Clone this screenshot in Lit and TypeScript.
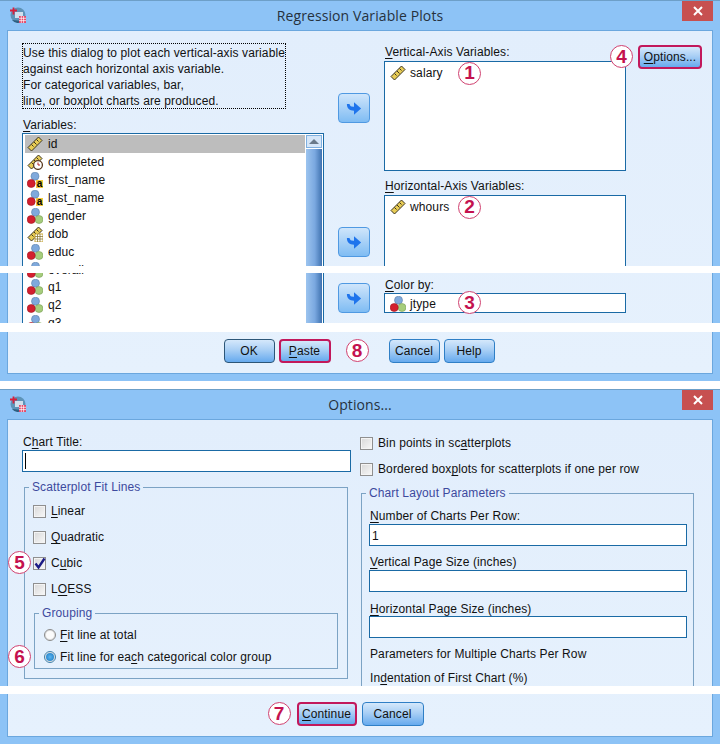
import { LitElement, html, css, svg } from "lit";
import { customElement } from "lit/decorators.js";

const ruler = svg`<g stroke="#3a3320" stroke-width="1"><polygon points="1,11.5 11.5,1 15,4.5 4.5,15" fill="#e8cc55"/><path d="M4.5,8.5l2,2M7,6l2.5,2.5M9.5,3.5l2,2" fill="none"/></g>`;
const scale = (v: unknown) => svg`<svg class="ic" viewBox="0 0 16 16">${ruler}${v}</svg>`;
const icons: Record<string, unknown> = {
  scale: scale(""),
  time: svg`<svg class="ic" viewBox="0 0 16 16">${ruler}<circle cx="11" cy="11" r="4.4" fill="#fff" stroke="#5a3a20" stroke-width="1.3"/><path d="M11,8.5V11H13" stroke="#b02020" fill="none"/></svg>`,
  date: svg`<svg class="ic" viewBox="0 0 16 16">${ruler}<rect x="8" y="8" width="8" height="8" fill="#fff" stroke="#c9a83a"/><path d="M8,10.5h8M8,13h8M10.5,8v8M13,8v8" stroke="#8a7a3a" stroke-width=".8"/></svg>`,
  nominal: svg`<svg class="ic" viewBox="0 0 16 16"><circle cx="8.5" cy="4.2" r="4" fill="#7fa9dc" stroke="#5a7fa8" stroke-width=".6"/><circle cx="12" cy="11.5" r="4" fill="#a6cd7c" stroke="#7a9f58" stroke-width=".6"/><circle cx="4.2" cy="11.5" r="4" fill="#d31f2e" stroke="#a01822" stroke-width=".6"/></svg>`,
  string: svg`<svg class="ic" viewBox="0 0 16 16"><circle cx="8" cy="4.2" r="4" fill="#7fa9dc" stroke="#5a7fa8" stroke-width=".6"/><circle cx="4.2" cy="11.5" r="4" fill="#d31f2e" stroke="#a01822" stroke-width=".6"/><rect x="9" y="8" width="7" height="8" fill="#f3c93c"/><text x="12.5" y="15" font-family="Liberation Sans" font-size="10" font-weight="700" text-anchor="middle" fill="#000">a</text></svg>`,
};

const appIcon = svg`<svg class="app" viewBox="0 0 16 16"><circle cx="8" cy="8" r="7.5" fill="#5d93b8"/><path d="M2,13a7.5,7.5 0 0 0 11,1z" fill="#2f5f80"/><rect x="5" y="5" width="8" height="6" fill="#cfe0ee"/><path d="M3.5,.5V7.5M0,3.5H7" stroke="#d8203c" stroke-width="1.8"/><rect x="9" y="9" width="7" height="7" fill="#e2486a"/><path d="M9,11.3h7M9,13.6h7M11.3,9v7M13.6,9v7" stroke="#fff" stroke-width=".7"/></svg>`;
const arrow = svg`<svg class="arr" viewBox="0 0 18 16"><path d="M1,3 L4,3 C4.5,5.5 5.5,6 9,6 V1 L17,8 L9,15 V10.5 C4,10.5 1,8 1,3z" fill="#1f74ec"/></svg>`;
const checkMark = svg`<svg class="mark" viewBox="0 0 13 13"><path d="M2.5,6.5 L5.5,10.5 L11.5,1.5" stroke="#1c1c86" stroke-width="2.4" fill="none"/></svg>`;

const varRows: [string, string, boolean?][] = [
  ["scale", "id", true], ["time", "completed"], ["string", "first_name"], ["string", "last_name"],
  ["nominal", "gender"], ["date", "dob"], ["nominal", "educ"], ["nominal", "overall"],
];
const laterRows = ["q1", "q2", "q3"];

@customElement("app-root")
export class AppRoot extends LitElement {
  static styles = css`
    :host { display: block; width: 720px; height: 744px; background: #fff; overflow: hidden;
      font: 12px/16px "Liberation Sans", Arial, sans-serif; letter-spacing: .115px; color: #111; }
    * { box-sizing: border-box; }
    u { text-decoration-thickness: 1px; text-underline-offset: 2px; }
    .root { display: flex; flex-direction: column; gap: 8px; }
    .win { position: relative; background: #8dc3f6; border-top: 1px solid #6d9fc8; padding: 0 7px 7px; }
    .bar { height: 29px; display: grid; grid-template-columns: 1fr auto 1fr; }
    .app { width: 16px; height: 16px; margin: 6px 0 0 3px; display: block; }
    .title { font: 14px/30px "Open Sans", sans-serif; letter-spacing: .1px; color: #26323e; }
    .close { justify-self: end; width: 31px; height: 20px; background: #c75050; color: #fff;
      display: flex; align-items: center; justify-content: center; }
    .close svg { width: 10px; height: 10px; }
    .body { border: 1px solid #6ba7de; background: linear-gradient(#e2eefc, #e6f1fd); padding: 0 0 10px 14px; }
    .main1 { height: 300px; padding-top: 12px; display: grid; grid-template-columns: 302px 32px 242px 64px; column-gap: 14px; }
    .arrows { padding-top: 50px; display: flex; flex-direction: column; }
    .col3 { padding-top: 1px; }
    .col4 { margin-left: -2px; padding-top: 2px; }
    .note { width: 264px; height: 66px; border: 1px dotted #000; padding-top: 1px; white-space: nowrap; }
    .lbl { display: block; height: 16px; white-space: nowrap; padding-left: 1px; }
    .gap7 { margin-top: 7px; }
    .gap8 { margin-top: 8px; }
    .list { height: 195px; border: 1px solid #1a6aa5; background: #fff; display: flex; padding: 1px 1px 0 2px; }
    .rows { flex: 1; padding: 0; overflow: hidden; }
    .row { height: 18px; display: flex; align-items: center; padding-left: 2px; gap: 5px; white-space: nowrap; }
    .row.sel { background: #bdbdbd; }
    .row.first-later { margin-top: -1px; }
    .ic { width: 16px; height: 16px; flex: none; display: block; }
    .sb { width: 16px; margin-left: 1px; display: flex; flex-direction: column; gap: 1px; }
    .sb-up { height: 13px; border: 1px solid #7fb0e0; background: #d5e6f8; display: flex; align-items: center; justify-content: center; }
    .sb-up i { width: 0; height: 0; border: 5px solid transparent; border-top: 0; border-bottom: 5px solid #6a7a8a; }
    .sb-th { flex: 1; background: linear-gradient(90deg, #9cc4ef, #7aa8e0 55%, #3f72b0); }
    .box { border: 1px solid #1a6aa5; background: #fff; padding: 2px 0 0 5px; }
    .box1 { height: 110px; margin-top: 1px; }
    .box2 { height: 75px; margin-top: 1px; }
    .box3 { height: 20px; padding-top: 1px; }
    .vname { width: 44px; }
    .item { height: 18px; display: flex; align-items: center; gap: 4px; white-space: nowrap; }
    .item .vname { flex: none; }
    .up3 { margin-top: -3px; }
    .badge { width: 23px; height: 23px; flex: none; border-radius: 50%; border: 1.5px solid #d0406f; background: #fff;
      color: #c4124f; font: 700 19px/20px "Liberation Sans", Arial, sans-serif; letter-spacing: 0; display: flex; align-items: center; justify-content: center; }
    .btn { height: 24px; border: 1px solid #2f7fc6; border-radius: 4px; padding: 0;
      background: linear-gradient(#d5e8fb, #a9cff5 45%, #66aaee); font: inherit; letter-spacing: inherit; color: #111; display: flex; align-items: center; justify-content: center; }
    .btn.def { border-color: #2c5678; }
    .btn.pink { border: 2px solid #c2185b; }
    .w51 { width: 51px; } .w52 { width: 52px; } .w64 { width: 64px; } .w60 { width: 60px; } .w62 { width: 62px; }
    .arrbtn { width: 32px; height: 30px; border: 1px solid #4f99e2; border-radius: 4px; padding: 0;
      background: linear-gradient(#cfe5fb, #7fbcf3); display: flex; align-items: center; justify-content: center; }
    .arr { width: 16px; height: 15px; display: block; }
    .g104 { margin-top: 104px; } .g26 { margin-top: 26px; }
    .badged { position: relative; width: max-content; }
    .badged .badge { position: absolute; top: 0; left: -28px; }
    .badged.b7 .badge { left: -29px; }
    .foot { padding-top: 8px; display: flex; justify-content: center; gap: 4px; padding-right: 16px; }
    .g15 { margin-left: 11px; } .g20 { margin-left: 16px; }
    .foot2 { gap: 5px; padding-right: 14px; }

    .main2 { height: 274px; display: grid; grid-template-columns: 329px 334px; column-gap: 9px; }
    .left2 { padding-top: 14px; }
    .input { height: 22px; border: 1px solid #1a6aa5; background: #fff; padding: 2px 1px; }
    .caret { display: block; width: 1px; height: 16px; background: #000; margin-left: 1px; }
    .val { display: block; line-height: 18px; padding-left: 1px; }
    fieldset { margin: 0; border: 1px solid #7ca3c4; min-inline-size: 0; }
    legend { color: #3d4a9e; padding: 0 3px; white-space: nowrap; line-height: 16px; }
    .fit { margin: 7px 3px 0 2px; padding: 3px 9px 9px 8px; }
    .fit > legend { margin-left: -4px; }
    .grp { margin: 3px 0 0 1px; padding: 3px 8px 0 9px; height: 64px; }
    .grp > legend { margin-left: -5px; }
    .chk { position: relative; height: 26px; display: flex; align-items: center; gap: 5px; white-space: nowrap; }
    .cb { width: 13px; height: 13px; flex: none; border: 1px solid #8f8f8f; background: linear-gradient(135deg, #d8d8d8, #f8f8f8); box-shadow: inset 0 0 0 1px #f4f4f4; }
    .mark { display: block; width: 13px; height: 13px; margin: -1px; }
    .chk .badge { position: absolute; left: -25px; top: 0; margin-top: 1px; }
    .rad { position: relative; height: 22px; display: flex; align-items: center; gap: 4px; white-space: nowrap; }
    .ro { width: 12px; height: 12px; flex: none; border-radius: 50%; border: 1px solid #8a8a8a; background: #fbfbfb; box-shadow: inset 0 0 0 1px #dcdcdc; display: flex; align-items: center; justify-content: center; }
    .ro.on { border-color: #3f7fa8; background: #fff; }
    .ro.on i { width: 8px; height: 8px; border-radius: 50%; background: radial-gradient(#58b4f0, #1c78c0); }
    .rad .badge { position: absolute; left: -36px; top: -1px; }
    .right2 { padding-top: 10px; }
    .layout { margin: 3px 0 0 1px; width: 333px; padding: 7px 6px 7px 7px; }
    .layout > legend { margin-left: -3px; }
    .m7 { margin-top: 7px; } .m8 { margin-top: 8px; }
    .down1 { padding-top: 1px; }
    .band { position: absolute; left: 0; width: 720px; background: #fff; }
    .t1 { top: 265px; height: 7px; } .t2 { top: 322px; height: 9px; } .t3 { top: 296px; height: 8px; }
  `;

  private badge(n: string, cls = "") { return html`<span class="badge ${cls}">${n}</span>`; }

  private bar(title: string) {
    return html`<div class="bar">
      <div>${appIcon}</div>
      <div class="title">${title}</div>
      <div class="close"><svg viewBox="0 0 10 10"><path d="M1,1L9,9M9,1L1,9" stroke="#fff" stroke-width="2"/></svg></div>
    </div>`;
  }

  private check(label: unknown, on = false, badge = "") {
    return html`<div class="chk"><span class="cb">${on ? checkMark : ""}</span><span>${label}</span>${badge ? this.badge(badge) : ""}</div>`;
  }

  render() {
    return html`<div class="root">
      <section class="win">
        ${this.bar("Regression Variable Plots")}
        <div class="body">
          <div class="main1">
            <div>
              <div class="note">Use this dialog to plot each vertical-axis variable<br>against each horizontal axis variable.<br>For categorical variables, bar,<br>line, or boxplot charts are produced.</div>
              <span class="lbl gap8"><u>V</u>ariables:</span>
              <div class="list">
                <div class="rows">
                  ${varRows.map(([i, n, s]) => html`<div class="row ${s ? "sel" : ""}">${icons[i]}<span>${n}</span></div>`)}
                  ${laterRows.map((n, k) => html`<div class="row ${k === 0 ? "first-later" : ""}">${icons.nominal}<span>${n}</span></div>`)}
                </div>
                <div class="sb"><div class="sb-up"><i></i></div><div class="sb-th"></div></div>
              </div>
            </div>
            <div class="arrows">
              <button class="arrbtn">${arrow}</button>
              <button class="arrbtn g104">${arrow}</button>
              <button class="arrbtn g26">${arrow}</button>
            </div>
            <div class="col3">
              <span class="lbl"><u>V</u>ertical-Axis Variables:</span>
              <div class="box box1"><div class="item">${icons.scale}<span class="vname">salary</span>${this.badge("1")}</div></div>
              <span class="lbl gap7"><u>H</u>orizontal-Axis Variables:</span>
              <div class="box box2"><div class="item">${icons.scale}<span class="vname">whours</span>${this.badge("2")}</div></div>
              <span class="lbl gap7"><u>C</u>olor by:</span>
              <div class="box box3"><div class="item">${icons.nominal}<span class="vname">jtype</span>${this.badge("3", "up3")}</div></div>
            </div>
            <div class="col4">
              <div class="badged">${this.badge("4")}<button class="btn pink w64"><span><u>O</u>ptions...</span></button></div>
            </div>
          </div>
          <div class="foot">
            <button class="btn def w51">OK</button>
            <button class="btn pink w52"><span><u>P</u>aste</span></button>
            <span class="g15">${this.badge("8")}</span>
            <button class="btn w51 g20">Cancel</button>
            <button class="btn w51">Help</button>
          </div>
        </div>
        <div class="band t1"></div>
        <div class="band t2"></div>
      </section>

      <section class="win">
        ${this.bar("Options...")}
        <div class="body">
          <div class="main2">
            <div class="left2">
              <span class="lbl">C<u>h</u>art Title:</span>
              <div class="input"><span class="caret"></span></div>
              <fieldset class="fit">
                <legend>Scatterplot Fit Lines</legend>
                ${this.check(html`<u>L</u>inear`)}
                ${this.check(html`<u>Q</u>uadratic`)}
                ${this.check(html`C<u>u</u>bic`, true, "5")}
                ${this.check(html`L<u>O</u>ESS`)}
                <fieldset class="grp">
                  <legend>Grouping</legend>
                  <div class="rad"><span class="ro"></span><span><u>F</u>it line at total</span></div>
                  <div class="rad"><span class="ro on"><i></i></span><span>Fit line for ea<u>c</u>h categorical color group</span>${this.badge("6")}</div>
                </fieldset>
              </fieldset>
            </div>
            <div class="right2">
              ${this.check(html`Bin points in sc<u>a</u>tterplots`)}
              ${this.check(html`Bordered box<u>p</u>lots for scatterplots if one per row`)}
              <fieldset class="layout">
                <legend>Chart Layout Parameters</legend>
                <span class="lbl"><u>N</u>umber of Charts Per Row:</span>
                <div class="input"><span class="val">1</span></div>
                <span class="lbl m8"><u>V</u>ertical Page Size (inches)</span>
                <div class="input"></div>
                <span class="lbl m8 down1"><u>H</u>orizontal Page Size (inches)</span>
                <div class="input"></div>
                <span class="lbl m8">Parameters for Multiple Charts Per Row</span>
                <span class="lbl m8">In<u>d</u>entation of First Chart (%)</span>
              </fieldset>
            </div>
          </div>
          <div class="foot foot2">
            <div class="badged b7">${this.badge("7")}<button class="btn pink w60"><span><u>C</u>ontinue</span></button></div>
            <button class="btn w62">Cancel</button>
          </div>
        </div>
        <div class="band t3"></div>
      </section>
    </div>`;
  }
}
